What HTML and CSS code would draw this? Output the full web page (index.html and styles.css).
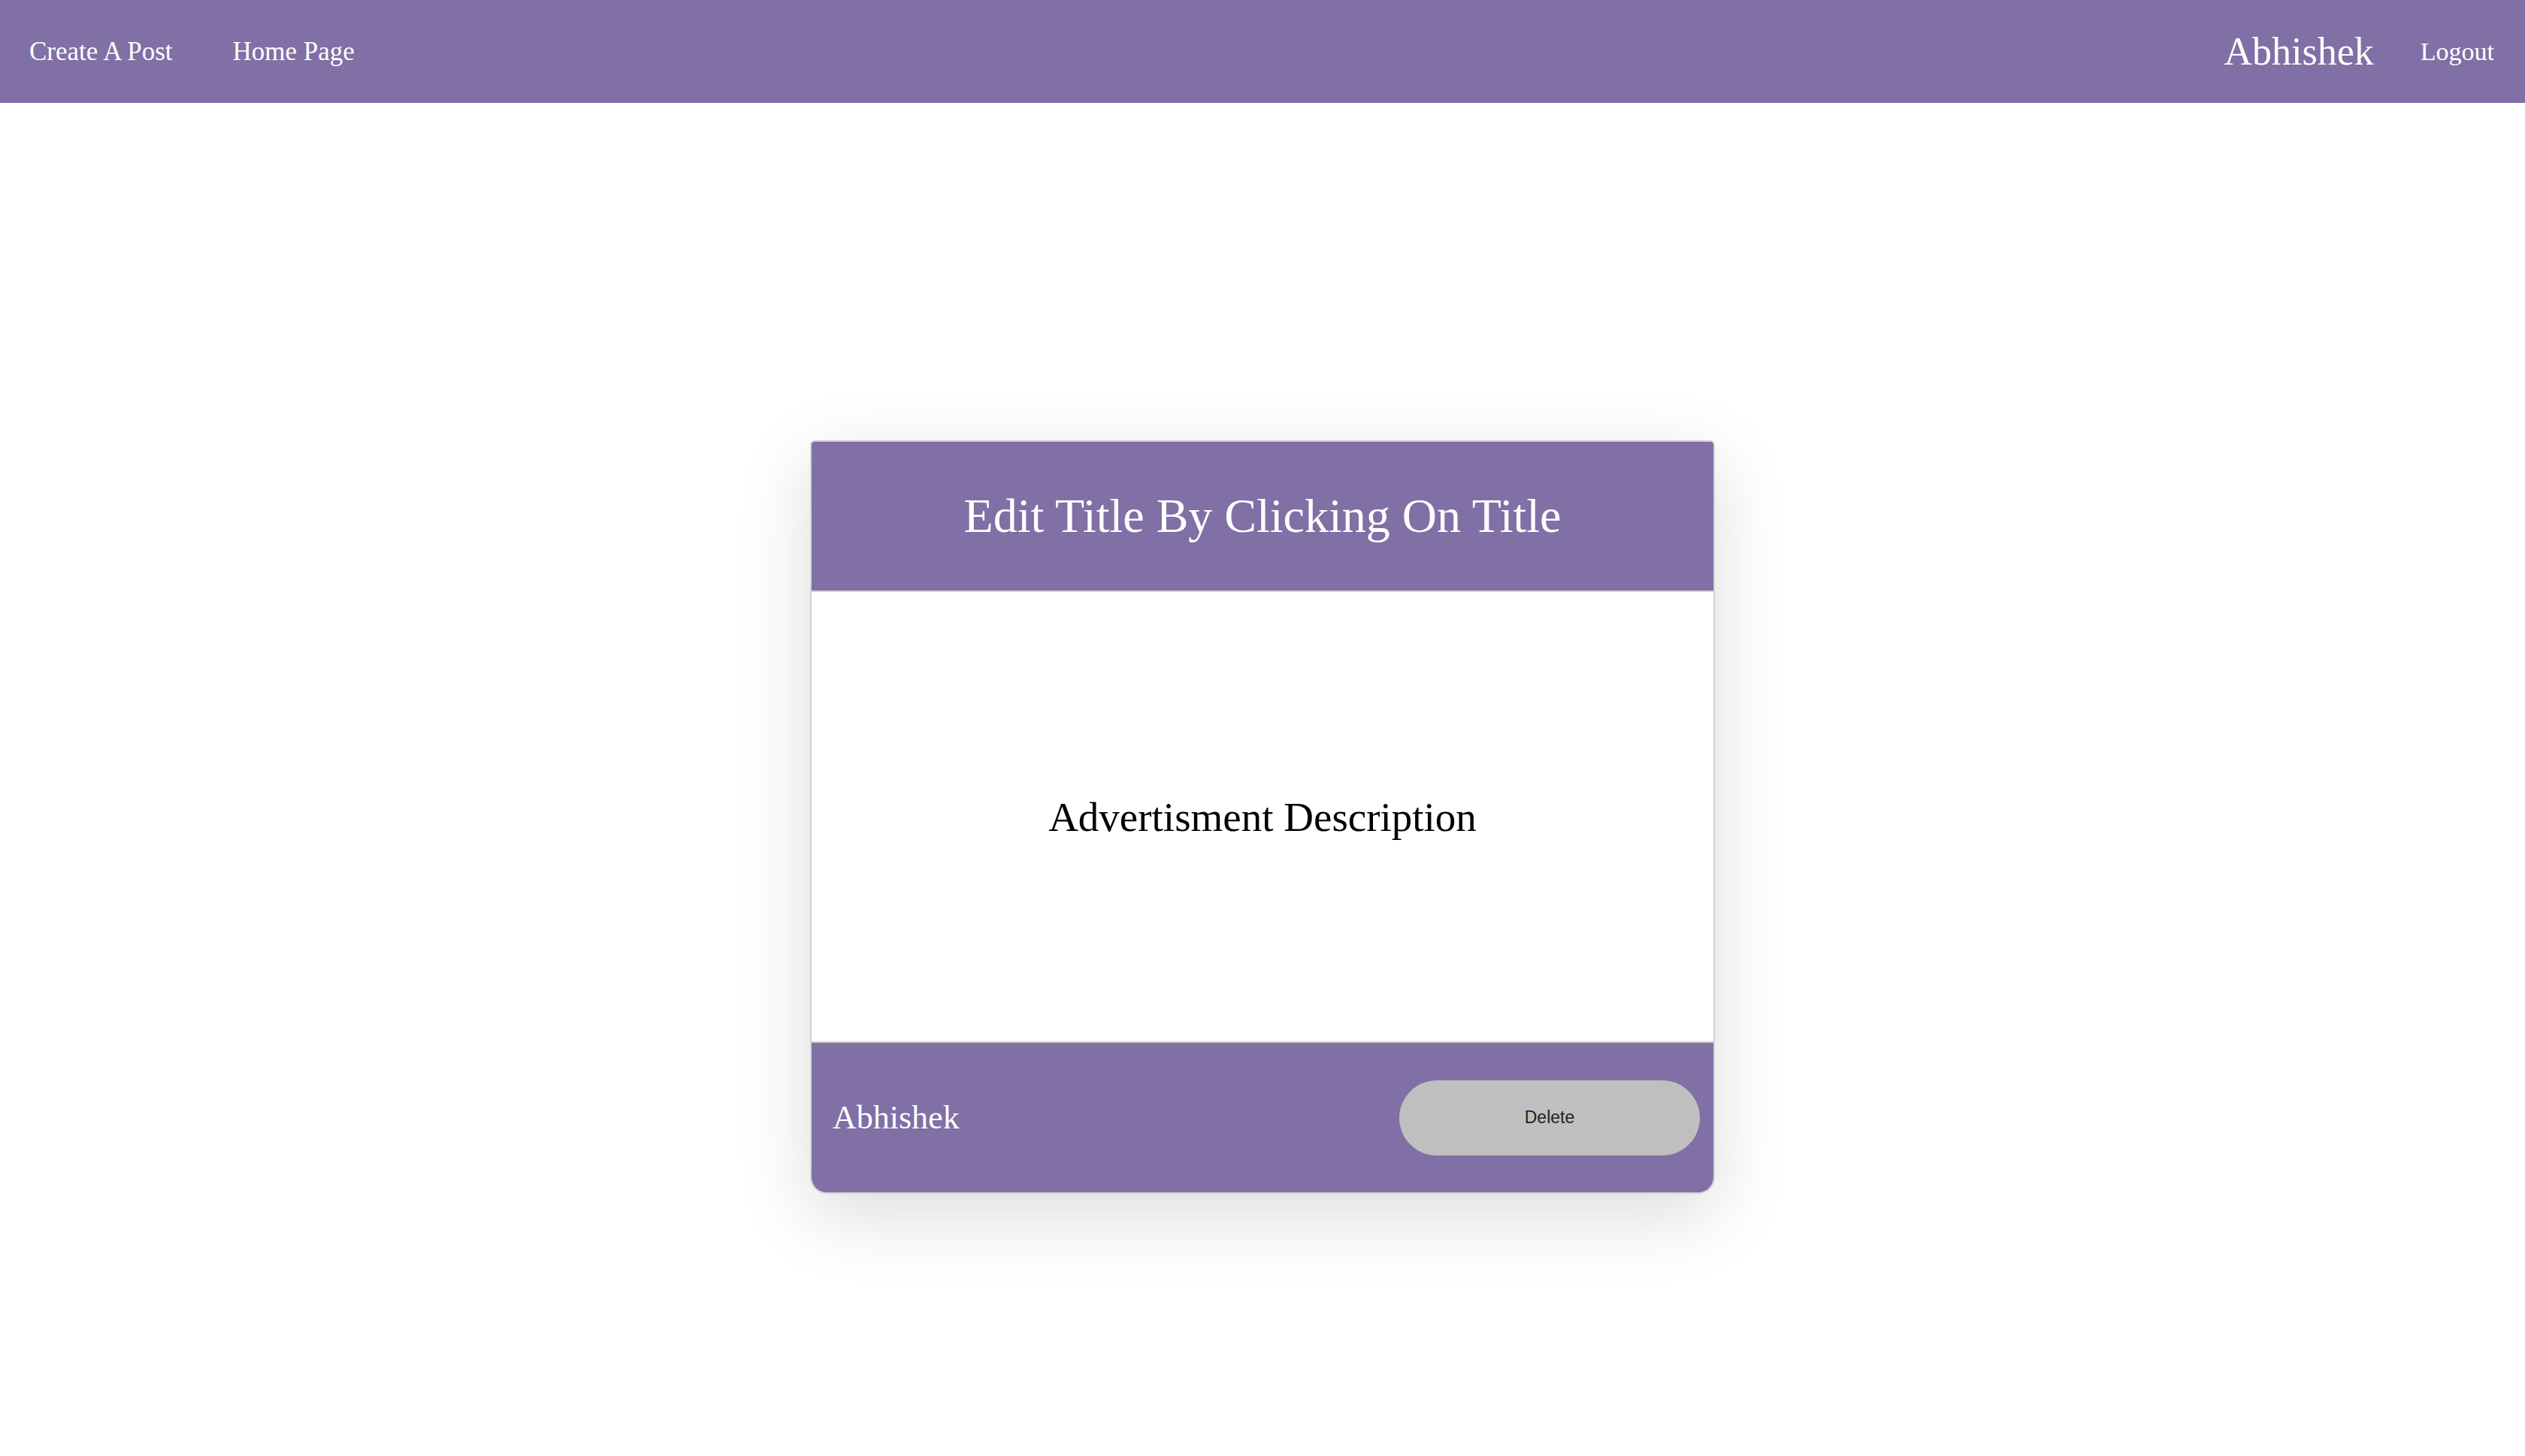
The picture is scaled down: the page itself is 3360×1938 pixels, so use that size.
FILE: index.html
```html
<!DOCTYPE html>
<html lang="en">
<head>
<meta charset="utf-8">
<title>Post</title>
<link rel="stylesheet" href="styles.css">
</head>
<body>
<nav class="navbar">
  <div class="nav-left">
    <a class="nav-link" href="#">Create A Post</a>
    <a class="nav-link" href="#">Home Page</a>
  </div>
  <div class="nav-right">
    <span class="nav-user">Abhishek</span>
    <a class="nav-link nav-logout" href="#">Logout</a>
  </div>
</nav>
<main class="main">
  <div class="card">
    <div class="card-title">Edit Title By Clicking On Title</div>
    <div class="card-body">Advertisment Description</div>
    <div class="card-footer">
      <span class="card-author">Abhishek</span>
      <button class="delete-btn">Delete</button>
    </div>
  </div>
</main>
</body>
</html>
```
FILE: styles.css
```css
* { box-sizing: border-box; }
html, body { margin: 0; padding: 0; background: #ffffff; }
body {
  font-family: "Liberation Serif", "Times New Roman", serif;
  min-height: 100vh;
}

.navbar {
  height: 137px;
  background: #8070a5;
  display: flex;
  align-items: center;
  justify-content: space-between;
  padding: 0 41px 0 39px;
}
.nav-left, .nav-right { display: flex; align-items: center; }
.nav-left { gap: 80px; }
.nav-right { gap: 62px; }
.nav-link {
  color: #ffffff;
  text-decoration: none;
  font-size: 35px;
}
.nav-logout { font-size: 34px; }
.nav-user {
  color: #ffffff;
  font-size: 52px;
}

.main {
  display: flex;
  justify-content: center;
  align-items: flex-start;
  padding-top: 449px;
  min-height: calc(100vh - 137px);
}
.card {
  width: 1204px;
  border: 2px solid #d2d2d2;
  border-radius: 6px 6px 22px 22px;
  overflow: hidden;
  background: #ffffff;
  box-shadow: 0 28px 100px rgba(0, 0, 0, 0.14);
}
.card-title {
  height: 198px;
  background: #8070a5;
  color: #ffffff;
  font-size: 64px;
  display: flex;
  align-items: center;
  justify-content: center;
}
.card-body {
  height: 602px;
  border-top: 2px solid #d2d2d2;
  border-bottom: 2px solid #d2d2d2;
  color: #000000;
  font-size: 55px;
  display: flex;
  align-items: center;
  justify-content: center;
}
.card-footer {
  height: 199px;
  background: #8070a5;
  display: flex;
  align-items: center;
  justify-content: space-between;
  padding: 0 18px 0 28px;
}
.card-author {
  color: #ffffff;
  font-size: 44px;
}
.delete-btn {
  width: 400px;
  height: 100px;
  border: none;
  border-radius: 50px;
  background: #bfbfbf;
  color: #222222;
  font-family: "Liberation Sans", Arial, sans-serif;
  font-size: 23px;
  cursor: pointer;
}
```
